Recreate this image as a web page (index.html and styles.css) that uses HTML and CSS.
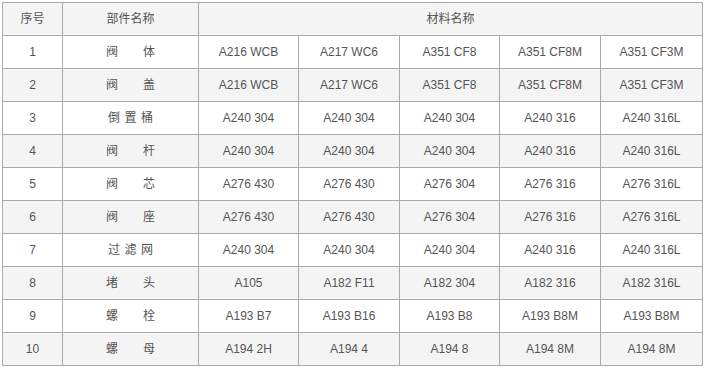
FILE: index.html
```html
<!DOCTYPE html>
<html>
<head>
<meta charset="utf-8">
<link rel="stylesheet" href="styles.css">
</head>
<body>
<table class="mat">
  <colgroup>
    <col class="c-no"><col class="c-name"><col class="c-m1"><col class="c-m2"><col class="c-m3"><col class="c-m4"><col class="c-m5">
  </colgroup>
  <thead>
    <tr class="alt"><th>序号</th><th>部件名称</th><th colspan="5">材料名称</th></tr>
  </thead>
  <tbody>
    <tr><td>1</td><td><span class="w2">阀体</span></td><td>A216 WCB</td><td>A217 WC6</td><td>A351 CF8</td><td>A351 CF8M</td><td>A351 CF3M</td></tr>
    <tr class="alt"><td>2</td><td><span class="w2">阀盖</span></td><td>A216 WCB</td><td>A217 WC6</td><td>A351 CF8</td><td>A351 CF8M</td><td>A351 CF3M</td></tr>
    <tr><td>3</td><td><span class="w3">倒置桶</span></td><td>A240 304</td><td>A240 304</td><td>A240 304</td><td>A240 316</td><td>A240 316L</td></tr>
    <tr class="alt"><td>4</td><td><span class="w2">阀杆</span></td><td>A240 304</td><td>A240 304</td><td>A240 304</td><td>A240 316</td><td>A240 316L</td></tr>
    <tr><td>5</td><td><span class="w2">阀芯</span></td><td>A276 430</td><td>A276 430</td><td>A276 304</td><td>A276 316</td><td>A276 316L</td></tr>
    <tr class="alt"><td>6</td><td><span class="w2">阀座</span></td><td>A276 430</td><td>A276 430</td><td>A276 304</td><td>A276 316</td><td>A276 316L</td></tr>
    <tr><td>7</td><td><span class="w3">过滤网</span></td><td>A240 304</td><td>A240 304</td><td>A240 304</td><td>A240 316</td><td>A240 316L</td></tr>
    <tr class="alt"><td>8</td><td><span class="w2">堵头</span></td><td>A105</td><td>A182 F11</td><td>A182 304</td><td>A182 316</td><td>A182 316L</td></tr>
    <tr><td>9</td><td><span class="w2">螺栓</span></td><td>A193 B7</td><td>A193 B16</td><td>A193 B8</td><td>A193 B8M</td><td>A193 B8M</td></tr>
    <tr class="alt"><td>10</td><td><span class="w2">螺母</span></td><td>A194 2H</td><td>A194 4</td><td>A194 8</td><td>A194 8M</td><td>A194 8M</td></tr>
  </tbody>
</table>
</body>
</html>
```
FILE: styles.css
```css
html, body {
  margin: 0;
  background: #fff;
}
body {
  padding: 2px;
  font-family: "Liberation Sans", Arial, "Noto Sans CJK SC", sans-serif;
  font-size: 12px;
  color: #555;
}
.mat {
  border-collapse: collapse;
  table-layout: fixed;
  width: 701px;
}
.c-no { width: 60px; }
.c-name { width: 136px; }
.c-m1 { width: 100px; }
.c-m2 { width: 101px; }
.c-m3 { width: 100px; }
.c-m4 { width: 101px; }
.c-m5 { width: 102px; }
.mat th, .mat td {
  border: 1px solid #aaa;
  height: 32px;
  padding: 0;
  text-align: center;
  vertical-align: middle;
  font-weight: normal;
  line-height: 16px;
}
.mat tr.alt th, .mat tr.alt td {
  background: #f4f4f4;
}
.w2 {
  letter-spacing: 25px;
  margin-right: -25px;
}
.w3 {
  letter-spacing: 4.5px;
  margin-right: -4.5px;
}
```
